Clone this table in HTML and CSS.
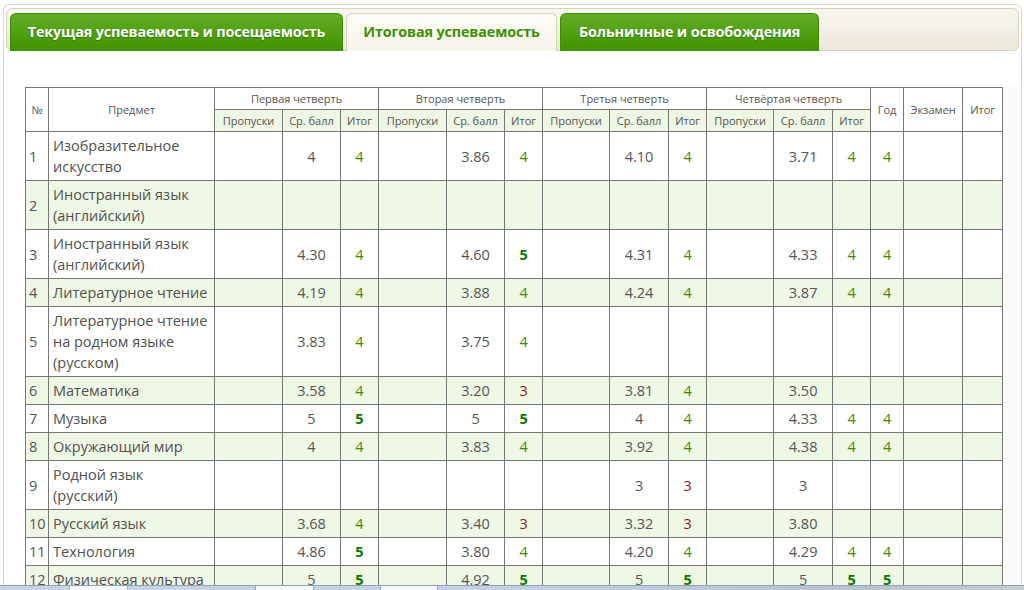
FILE: index.html
```html
<!DOCTYPE html>
<html lang="ru">
<head>
<meta charset="utf-8">
<title>Итоговая успеваемость</title>
<link rel="stylesheet" href="styles.css">
</head>
<body>
<div class="frame">
  <div class="tabbar">
    <div class="tab tab-green t1">Текущая успеваемость и посещаемость</div>
    <div class="tab tab-active t2">Итоговая успеваемость</div>
    <div class="tab tab-green t3">Больничные и освобождения</div>
  </div>
  <div class="content">
    <table class="grades">
      <colgroup>
        <col class="c-num"><col class="c-subj">
        <col class="c-p"><col class="c-s"><col class="c-i">
        <col class="c-p"><col class="c-s"><col class="c-i">
        <col class="c-p2"><col class="c-s2"><col class="c-i">
        <col class="c-p2"><col class="c-s2"><col class="c-i">
        <col class="c-y"><col class="c-e"><col class="c-f">
      </colgroup>
      <thead>
        <tr>
          <th rowspan="2">№</th>
          <th rowspan="2">Предмет</th>
          <th colspan="3">Первая четверть</th>
          <th colspan="3">Вторая четверть</th>
          <th colspan="3">Третья четверть</th>
          <th colspan="3">Четвёртая четверть</th>
          <th rowspan="2">Год</th>
          <th rowspan="2">Экзамен</th>
          <th rowspan="2">Итог</th>
        </tr>
        <tr class="sub">
          <th>Пропуски</th><th>Ср. балл</th><th>Итог</th>
          <th>Пропуски</th><th>Ср. балл</th><th>Итог</th>
          <th>Пропуски</th><th>Ср. балл</th><th>Итог</th>
          <th>Пропуски</th><th>Ср. балл</th><th>Итог</th>
        </tr>
      </thead>
      <tbody>
        <tr>
          <td class="n">1</td><td class="s">Изобразительное искусство</td>
          <td></td><td class="a">4</td><td class="g4">4</td>
          <td></td><td class="a">3.86</td><td class="g4">4</td>
          <td></td><td class="a">4.10</td><td class="g4">4</td>
          <td></td><td class="a">3.71</td><td class="g4">4</td>
          <td class="g4">4</td><td></td><td></td>
        </tr>
        <tr class="alt">
          <td class="n">2</td><td class="s">Иностранный язык (английский)</td>
          <td></td><td></td><td></td>
          <td></td><td></td><td></td>
          <td></td><td></td><td></td>
          <td></td><td></td><td></td>
          <td></td><td></td><td></td>
        </tr>
        <tr>
          <td class="n">3</td><td class="s">Иностранный язык (английский)</td>
          <td></td><td class="a">4.30</td><td class="g4">4</td>
          <td></td><td class="a">4.60</td><td class="g5">5</td>
          <td></td><td class="a">4.31</td><td class="g4">4</td>
          <td></td><td class="a">4.33</td><td class="g4">4</td>
          <td class="g4">4</td><td></td><td></td>
        </tr>
        <tr class="alt">
          <td class="n">4</td><td class="s">Литературное чтение</td>
          <td></td><td class="a">4.19</td><td class="g4">4</td>
          <td></td><td class="a">3.88</td><td class="g4">4</td>
          <td></td><td class="a">4.24</td><td class="g4">4</td>
          <td></td><td class="a">3.87</td><td class="g4">4</td>
          <td class="g4">4</td><td></td><td></td>
        </tr>
        <tr>
          <td class="n">5</td><td class="s">Литературное чтение на родном языке (русском)</td>
          <td></td><td class="a">3.83</td><td class="g4">4</td>
          <td></td><td class="a">3.75</td><td class="g4">4</td>
          <td></td><td></td><td></td>
          <td></td><td></td><td></td>
          <td></td><td></td><td></td>
        </tr>
        <tr class="alt">
          <td class="n">6</td><td class="s">Математика</td>
          <td></td><td class="a">3.58</td><td class="g4">4</td>
          <td></td><td class="a">3.20</td><td class="g3">3</td>
          <td></td><td class="a">3.81</td><td class="g4">4</td>
          <td></td><td class="a">3.50</td><td></td>
          <td></td><td></td><td></td>
        </tr>
        <tr>
          <td class="n">7</td><td class="s">Музыка</td>
          <td></td><td class="a">5</td><td class="g5">5</td>
          <td></td><td class="a">5</td><td class="g5">5</td>
          <td></td><td class="a">4</td><td class="g4">4</td>
          <td></td><td class="a">4.33</td><td class="g4">4</td>
          <td class="g4">4</td><td></td><td></td>
        </tr>
        <tr class="alt">
          <td class="n">8</td><td class="s">Окружающий мир</td>
          <td></td><td class="a">4</td><td class="g4">4</td>
          <td></td><td class="a">3.83</td><td class="g4">4</td>
          <td></td><td class="a">3.92</td><td class="g4">4</td>
          <td></td><td class="a">4.38</td><td class="g4">4</td>
          <td class="g4">4</td><td></td><td></td>
        </tr>
        <tr>
          <td class="n">9</td><td class="s">Родной язык (русский)</td>
          <td></td><td></td><td></td>
          <td></td><td></td><td></td>
          <td></td><td class="a">3</td><td class="g3">3</td>
          <td></td><td class="a">3</td><td></td>
          <td></td><td></td><td></td>
        </tr>
        <tr class="alt">
          <td class="n">10</td><td class="s">Русский язык</td>
          <td></td><td class="a">3.68</td><td class="g4">4</td>
          <td></td><td class="a">3.40</td><td class="g3">3</td>
          <td></td><td class="a">3.32</td><td class="g3">3</td>
          <td></td><td class="a">3.80</td><td></td>
          <td></td><td></td><td></td>
        </tr>
        <tr>
          <td class="n">11</td><td class="s">Технология</td>
          <td></td><td class="a">4.86</td><td class="g5">5</td>
          <td></td><td class="a">3.80</td><td class="g4">4</td>
          <td></td><td class="a">4.20</td><td class="g4">4</td>
          <td></td><td class="a">4.29</td><td class="g4">4</td>
          <td class="g4">4</td><td></td><td></td>
        </tr>
        <tr class="alt">
          <td class="n">12</td><td class="s">Физическая культура</td>
          <td></td><td class="a">5</td><td class="g5">5</td>
          <td></td><td class="a">4.92</td><td class="g5">5</td>
          <td></td><td class="a">5</td><td class="g5">5</td>
          <td></td><td class="a">5</td><td class="g5">5</td>
          <td class="g5">5</td><td></td><td></td>
        </tr>
      </tbody>
    </table>
  </div>
</div>
<div class="taskstrip">
  <span class="seg blue w69"></span>
  <span class="seg light w59"></span>
  <span class="seg blue w127"></span>
  <span class="seg light w59"></span>
  <span class="seg blue w66"></span>
  <span class="seg light w58"></span>
  <span class="seg fade"></span>
</div>
</body>
</html>
```

FILE: styles.css
```css
html, body {
  margin: 0;
  padding: 0;
  background: #ffffff;
  overflow: hidden;
  height: 590px;
}

body {
  font-family: "Open Sans", "Noto Sans", "DejaVu Sans", sans-serif;
  color: #555555;
}

.frame {
  margin: 4px 2px 0 3px;
  border: 1px solid #ddd6c2;
  border-bottom: none;
  border-radius: 6px 6px 0 0;
  min-height: 600px;
  background: #ffffff;
}

.tabbar {
  display: flex;
  gap: 3px;
  margin: 3px 2px 0 2px;
  padding: 4px 3px 0 3px;
  height: 37px;
  border: 1px solid #d9d1bb;
  border-radius: 6px;
  background: linear-gradient(#f8f6f0, #ece8dd);
}

.tab {
  box-sizing: border-box;
  height: 38px;
  border-radius: 6px 6px 0 0;
  font-size: 14.4px;
  font-weight: 700;
  line-height: 36px;
  text-align: center;
  white-space: nowrap;
  letter-spacing: -0.15px;
}

.tab-green {
  background: linear-gradient(#62ad26, #3f9300);
  border: 1px solid #3b8a00;
  border-bottom: none;
  color: #ffffff;
  text-shadow: 0 1px 1px rgba(20, 70, 0, 0.45);
}

.tab-active {
  background: linear-gradient(#fdfcf8, #f6f3ea);
  border: 1px solid #d9d1bb;
  border-bottom: none;
  color: #3f8f00;
}

.t1 { width: 333px; }
.t2 { width: 211px; }
.t3 { width: 259px; }

.content {
  display: flex;
  padding: 36px 0 0 21px;
}

.grades {
  border-collapse: collapse;
  table-layout: fixed;
  width: 977px;
  background: #ffffff;
}

.content::after {
  content: "";
  flex: 1;
  background: #fafafa;
}

.c-num { width: 23px; }
.c-subj { width: 166px; }
.c-p { width: 68px; }
.c-s { width: 58px; }
.c-i { width: 38px; }
.c-p2 { width: 67px; }
.c-s2 { width: 59px; }
.c-y { width: 33px; }
.c-e { width: 59px; }
.c-f { width: 40px; }

.grades th,
.grades td {
  border: 1px solid #777777;
}

.grades th {
  font-size: 11px;
  font-weight: 400;
  line-height: 15px;
  padding: 3px 2px;
  color: #555555;
  text-align: center;
  vertical-align: middle;
  background: #ffffff;
  white-space: nowrap;
}

.grades tr.sub th {
  background: #eef6e4;
}

.grades td {
  font-size: 14.5px;
  line-height: 21px;
  padding: 3px 4px;
  vertical-align: middle;
  text-align: center;
  color: #555555;
}

.grades tr.alt td {
  background: #eff7e5;
}

.grades td.n {
  text-align: left;
  padding-left: 3px;
  padding-right: 0;
}

.grades td.s {
  text-align: left;
  color: #505050;
}

.grades td.a { color: #555555; }
.grades td.g4 { color: #3f8a0a; }
.grades td.g5 { color: #0a7a00; font-weight: 700; }
.grades td.g3 { color: #9a1010; }

.taskstrip {
  position: fixed;
  left: 0;
  right: 0;
  bottom: 0;
  height: 4px;
  display: flex;
  border-top: 1px solid #8fa2bb;
  background: #c3cfdf;
}

.seg { display: block; height: 4px; }
.seg.blue { background: #c6d3e4; }
.seg.light {
  background: #f7f8fa;
  border-left: 1px solid #9aa7b8;
  border-right: 1px solid #9aa7b8;
  box-sizing: border-box;
}
.seg.fade {
  flex: 1;
  background: linear-gradient(90deg, #c6d3e4, #b9c2cc 70%, #c8cdd2);
}
.w69 { width: 69px; }
.w59 { width: 59px; }
.w127 { width: 127px; }
.w66 { width: 66px; }
.w58 { width: 58px; }
```
